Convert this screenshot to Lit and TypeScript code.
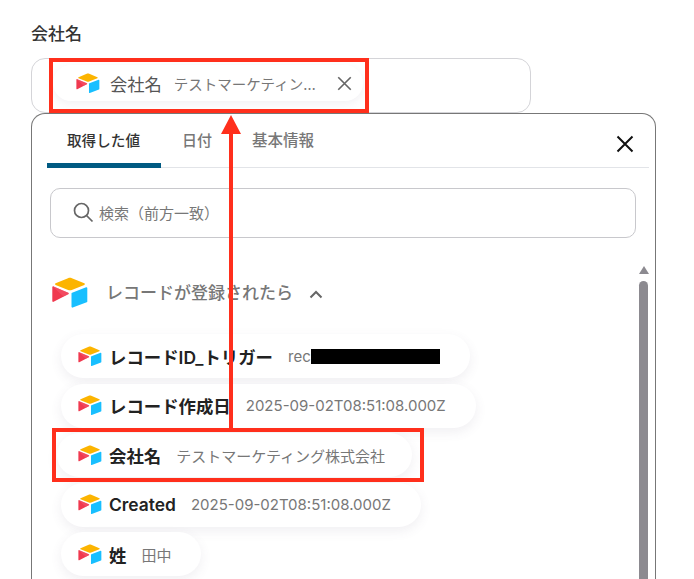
import { LitElement, html, css, svg } from "lit";
import { customElement } from "lit/decorators.js";

const logo = (cls: string) => html`<svg class=${cls} viewBox="0 0 36 32" aria-hidden="true">
  ${svg`<path d="M16 1.2 3.6 6.3c-.7.3-.7 1.3 0 1.6l12.5 5c1.2.5 2.500.5 3.700 0l12.500-5c.7-.3.7-1.300 0-1.600L19.900 1.200c-1.300-.5-2.700-.5-3.900 0Z" fill="#fcb400"/>
  <path d="M19.500 16.500v13.300c0 .6.600 1 1.200.8l14-5.400c.4-.2.600-.5.600-.8V11.100c0-.6-.6-1-1.200-.8l-14 5.400c-.4.2-.6.5-.6.8Z" fill="#18bfff"/>
  <path d="M16.200 17.200 1.600 24.800c-.6.300-1.300-.1-1.300-.8V10.300c0-.3.100-.5.300-.7.100-.1.200-.1.300-.2.200-.1.500-.1.700 0l14.600 6.300c.7.300.7 1.200 0 1.500Z" fill="#f0394f"/>
  <path d="M16.200 17.200 11.500 19.600.6 9.600c.1-.1.200-.1.300-.2.200-.1.500-.1.700 0l14.600 6.300c.7.300.7 1.200 0 1.500Z" fill="#f4596f" opacity=".55"/>`}
</svg>`;

const cross = (cls: string) => html`<svg class=${cls} viewBox="0 0 18 18" aria-hidden="true">
  ${svg`<path d="M1.500 1.500 16.500 16.500M16.500 1.500 1.500 16.500" fill="none" stroke="currentColor" stroke-width="2"/>`}
</svg>`;

const rows = [
  { name: "レコードID_トリガー", value: "rec", redacted: true },
  { name: "レコード作成日", value: "2025-09-02T08:51:08.000Z" },
  { name: "会社名", value: "テストマーケティング株式会社", shifted: true },
  { name: "Created", value: "2025-09-02T08:51:08.000Z" },
  { name: "姓", value: "田中" },
];

@customElement("app-root")
export class AppRoot extends LitElement {
  static styles = css`
    :host {
      display: block;
      position: relative;
      width: 694px;
      height: 579px;
      overflow: hidden;
      background: #fff;
      color: #222;
      font-family: Inter, "Noto Sans CJK JP", "Noto Sans", sans-serif;
    }
    .page {
      height: 579px;
      box-sizing: border-box;
      padding: 24px 38px 0 31px;
      display: flex;
      flex-direction: column;
    }
    .label {
      font-size: 17px;
      line-height: 20px;
      font-weight: 500;
      color: #333;
      margin-bottom: 14px;
    }
    .field {
      box-sizing: border-box;
      width: 500px;
      height: 55px;
      flex: none;
      border: 1px solid #d4d4d8;
      border-radius: 14px;
      padding: 6px 0 0 21px;
    }
    .picked {
      box-sizing: border-box;
      width: 310px;
      height: 36px;
      display: flex;
      align-items: center;
      padding: 0 11px 0 23px;
      border-radius: 18px;
      background: #fff;
      box-shadow: 0 3px 8px rgba(90, 80, 110, 0.08);
    }
    .picked .small-logo { margin-right: 10px; }
    .picked-name { font-size: 17.300px; color: #555; margin-right: 12px; white-space: nowrap; }
    .picked-value {
      font-size: 14.500px;
      color: #777;
      width: 142px;
      white-space: nowrap;
      overflow: hidden;
      text-overflow: ellipsis;
    }
    .picked-x { width: 15px; height: 15px; margin-left: auto; color: #666; }
    .small-logo { width: 24px; height: 21px; flex: none; }
    .panel {
      flex: 1;
      box-sizing: border-box;
      width: 625px;
      border: 1px solid #777;
      border-bottom: none;
      border-radius: 14px 14px 0 0;
      background: #fff;
      display: flex;
      flex-direction: column;
      min-height: 0;
    }
    .tabs {
      flex: none;
      height: 53px;
      margin: 0 6px 0 15px;
      border-bottom: 1px solid #e2e4e8;
      display: flex;
      align-items: stretch;
    }
    .tab {
      box-sizing: border-box;
      font-size: 15px;
      font-weight: 500;
      color: #777;
      padding: 17px 0 0 0;
      line-height: 20px;
      white-space: nowrap;
    }
    .tab.active {
      width: 114px;
      padding-left: 20px;
      color: #333;
      font-size: 14.600px;
      border-bottom: 5px solid #005a82;
      border-radius: 6px 6px 0 0;
      margin-right: 21px;
      margin-bottom: -1px;
    }
    .tab-plain { margin-right: 40px; }
    .tab-plain + .tab-plain { font-size: 15.500px; }
    .close { width: 18px; height: 18px; margin: 21px 15px 0 auto; color: #111; }
    .search {
      flex: none;
      box-sizing: border-box;
      margin: 20px 0 0 18px;
      width: 586px;
      height: 50px;
      border: 1px solid #c8c8cc;
      border-radius: 10px;
      display: flex;
      align-items: center;
      padding-left: 21px;
      font-size: 15px;
      color: #777;
      gap: 5px;
    }
    .search span { position: relative; top: -1px; }
    .search svg { width: 22px; height: 22px; color: #666; position: relative; top: -1px; }
    .scroll-area {
      flex: 1;
      min-height: 0;
      position: relative;
      padding: 38px 0 0 20px;
    }
    .section {
      display: flex;
      align-items: center;
      height: 34px;
      font-size: 17px;
      font-weight: 500;
      color: #777;
    }
    .section span { position: relative; top: -2px; margin-left: -1px; }
    .big-logo { width: 36px; height: 32px; margin-right: 19px; }
    .chev { width: 14px; height: 9px; margin-left: 16px; color: #666; position: relative; top: 1px; }
    .list {
      display: flex;
      flex-direction: column;
      align-items: flex-start;
      gap: 5.500px;
      margin-top: 24px;
      margin-left: 9px;
    }
    .row {
      box-sizing: border-box;
      height: 44px;
      display: flex;
      align-items: center;
      padding: 0 30px 0 17px;
      border-radius: 22px;
      background: #fff;
      box-shadow: 0 4px 12px rgba(90, 80, 110, 0.09);
      white-space: nowrap;
    }
    .row.shifted { margin-left: -4px; padding-left: 21px; padding-right: 27px; }
    .row-name { font-size: 17.400px; font-weight: 600; color: #222; margin: 0 15px 0 7px; }
    .row-value { font-size: 15px; color: #777; }
    .redacted { display: inline-block; width: 129px; height: 15px; background: #000; vertical-align: -2px; }
    .scrollbar {
      position: absolute;
      right: 7px;
      top: 28px;
      width: 9px;
      display: flex;
      flex-direction: column;
      align-items: center;
      gap: 7px;
      height: 400px;
    }
    .sb-up { width: 0; height: 0; border-left: 5px solid transparent; border-right: 5px solid transparent; border-bottom: 8px solid #8c8a90; }
    .sb-thumb { flex: 1; width: 9px; border-radius: 5px 5px 0 0; background: #8c8a90; }
    /* Annotations drawn over the screenshot */
    .note { position: absolute; box-sizing: border-box; border: 4px solid #ff2f1c; pointer-events: none; }
    .note-top { left: 49px; top: 58px; width: 320px; height: 55px; }
    .note-row { left: 52px; top: 428px; width: 372px; height: 54px; }
    .arrow { position: absolute; left: 221px; top: 114px; width: 20px; height: 315px; pointer-events: none; }
  `;

  render() {
    return html`
      <div class="page">
        <div class="label">会社名</div>
        <div class="field">
          <div class="picked">
            ${logo("small-logo")}
            <span class="picked-name">会社名</span>
            <span class="picked-value">テストマーケティング株式会社</span>
            ${cross("picked-x")}
          </div>
        </div>
        <div class="panel">
          <div class="tabs">
            <div class="tab active">取得した値</div>
            <div class="tab tab-plain">日付</div>
            <div class="tab tab-plain">基本情報</div>
            ${cross("close")}
          </div>
          <div class="search">
            <svg viewBox="0 0 22 22" aria-hidden="true">
              ${svg`<circle cx="9.500" cy="9.500" r="7" fill="none" stroke="currentColor" stroke-width="1.700"/><path d="m14.500 14.500 6 6" fill="none" stroke="currentColor" stroke-width="1.700"/>`}
            </svg>
            <span>検索（前方一致）</span>
          </div>
          <div class="scroll-area">
            <div class="section">
              ${logo("big-logo")}
              <span>レコードが登録されたら</span>
              <svg class="chev" viewBox="0 0 14 9" aria-hidden="true">
                ${svg`<path d="M1.500 7.500 7 2l5.500 5.500" fill="none" stroke="currentColor" stroke-width="2"/>`}
              </svg>
            </div>
            <div class="list">
              ${rows.map(
                (r) => html`<div class="row ${r.shifted ? "shifted" : ""}">
                  ${logo("small-logo")}
                  <span class="row-name">${r.name}</span>
                  <span class="row-value">${r.value}${r.redacted ? html`<span class="redacted"></span>` : ""}</span>
                </div>`
              )}
            </div>
            <div class="scrollbar"><div class="sb-up"></div><div class="sb-thumb"></div></div>
          </div>
        </div>
      </div>
      <div class="note note-top"></div>
      <div class="note note-row"></div>
      <svg class="arrow" viewBox="0 0 20 315" aria-hidden="true">
        ${svg`<path d="M10 1 20 20H12V315H8V20H0Z" fill="#ff2f1c"/>`}
      </svg>
    `;
  }
}
